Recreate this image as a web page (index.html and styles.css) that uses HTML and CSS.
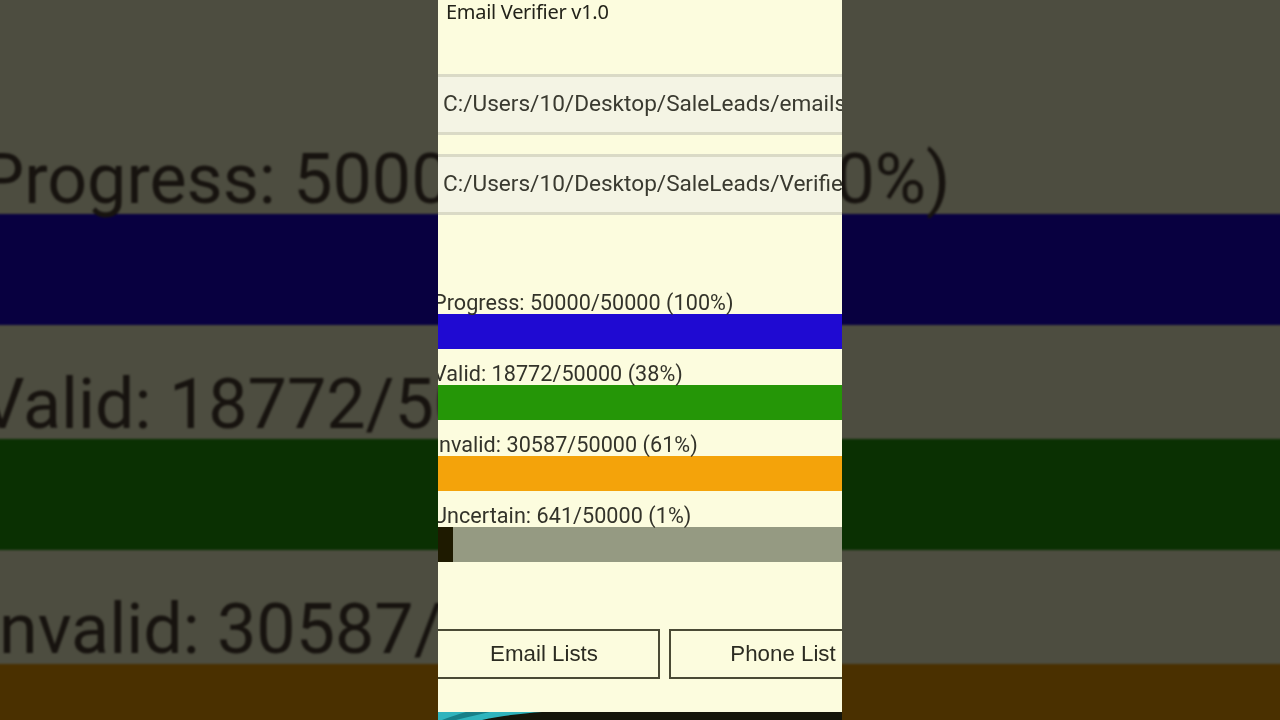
FILE: index.html
```html
<!DOCTYPE html>
<html lang="en">
<head>
<meta charset="utf-8">
<title>Email Verifier v1.0</title>
<link rel="stylesheet" href="styles.css">
</head>
<body>
<div class="backdrop" aria-hidden="true">
  <div class="bg-row"><div class="bg-label">Progress: 50000/50000 (100%)</div><div class="bg-bar bg-blue"></div></div>
  <div class="bg-row"><div class="bg-label">Valid: 18772/50000 (38%)</div><div class="bg-bar bg-green"></div></div>
  <div class="bg-row"><div class="bg-label">Invalid: 30587/50000 (61%)</div><div class="bg-bar bg-orange"></div></div>
</div>
<main class="app">
  <h1 class="title">Email Verifier v1.0</h1>
  <div class="field">C:/Users/10/Desktop/SaleLeads/emails.csv</div>
  <div class="field second">C:/Users/10/Desktop/SaleLeads/Verified</div>
  <section class="meters">
    <div class="meter">
      <div class="label">Progress: 50000/50000 (100%)</div>
      <div class="bar blue"></div>
    </div>
    <div class="meter">
      <div class="label">Valid: 18772/50000 (38%)</div>
      <div class="bar green"></div>
    </div>
    <div class="meter">
      <div class="label">Invalid: 30587/50000 (61%)</div>
      <div class="bar orange"></div>
    </div>
    <div class="meter">
      <div class="label">Uncertain: 641/50000 (1%)</div>
      <div class="bar grey"><div class="fill"></div></div>
    </div>
  </section>
  <div class="actions">
    <button class="btn first">Email Lists</button>
    <button class="btn next">Phone List</button>
  </div>
  <div class="strip">
    <svg class="swoosh" width="404" height="8" viewBox="0 0 404 8"><path d="M0 0H104C88 1 62 4 44 8H0Z" fill="#2fb4bd"/><path d="M28 0H52C42 2 30 5 18 8H4C12 5 20 2 28 0Z" fill="#177f88"/></svg>
  </div>
</main>
</body>
</html>
```
FILE: styles.css
```css
* { box-sizing: border-box; }
html, body { margin: 0; height: 720px; overflow: hidden; }
body { position: relative; background: #4d4d40; font-family: "Liberation Sans", Arial, sans-serif; }

.backdrop { position: absolute; top: 0; left: -10px; right: -10px; height: 730px; overflow: hidden; padding-top: 100px; filter: blur(1.2px); }
.bg-row { height: 225px; }
.bg-label { height: 114px; margin-left: -10px; font: 400 70px/159px Roboto, sans-serif; color: #17130f; white-space: nowrap; }
.bg-bar { height: 111px; }
.bg-blue { background: #080040; }
.bg-green { background: #0a3002; }
.bg-orange { background: #4a3000; }

.app { position: relative; width: 404px; height: 720px; margin: 0 auto; background: #fcfcde; overflow: hidden; color: #2c2c22; filter: blur(0.35px); }
.title { margin: 0; height: 74px; padding: 0 0 0 8px; font: 400 20px/24px "Noto Sans", sans-serif; letter-spacing: -0.29px; color: #23231a; }

.field { height: 61px; padding-left: 5px; border-top: 3px solid #dadac6; border-bottom: 3px solid #dadac6; background: #f4f4e4; font: 400 22.6px/53px Roboto, sans-serif; white-space: nowrap; overflow: hidden; color: #3a3a30; }
.second { margin-top: 19px; }

.meters { margin-top: 63px; }
.meter { height: 71px; }
.label { height: 36px; margin-left: -5px; font: 400 21.6px/50px Roboto, sans-serif; letter-spacing: 0.04px; white-space: nowrap; color: #33332a; }
.bar { height: 35px; }
.blue { background: #1f0ad2; }
.green { background: #259607; }
.orange { background: #f4a30a; }
.grey { background: #959a82; }
.fill { width: 15px; height: 100%; background: #1e1a00; }

.actions { display: flex; gap: 9px; margin-top: 67px; margin-left: -10px; width: 480px; }
.btn { height: 50px; flex: none; background: transparent; border: 2px solid #4a4a35; font: 400 22.3px "Liberation Sans", sans-serif; color: #2c2c22; padding: 0; }
.first { width: 232px; }
.next { width: 228px; }

.strip { margin-top: 33px; height: 8px; background: #15150a; }
.swoosh { display: block; }
```
